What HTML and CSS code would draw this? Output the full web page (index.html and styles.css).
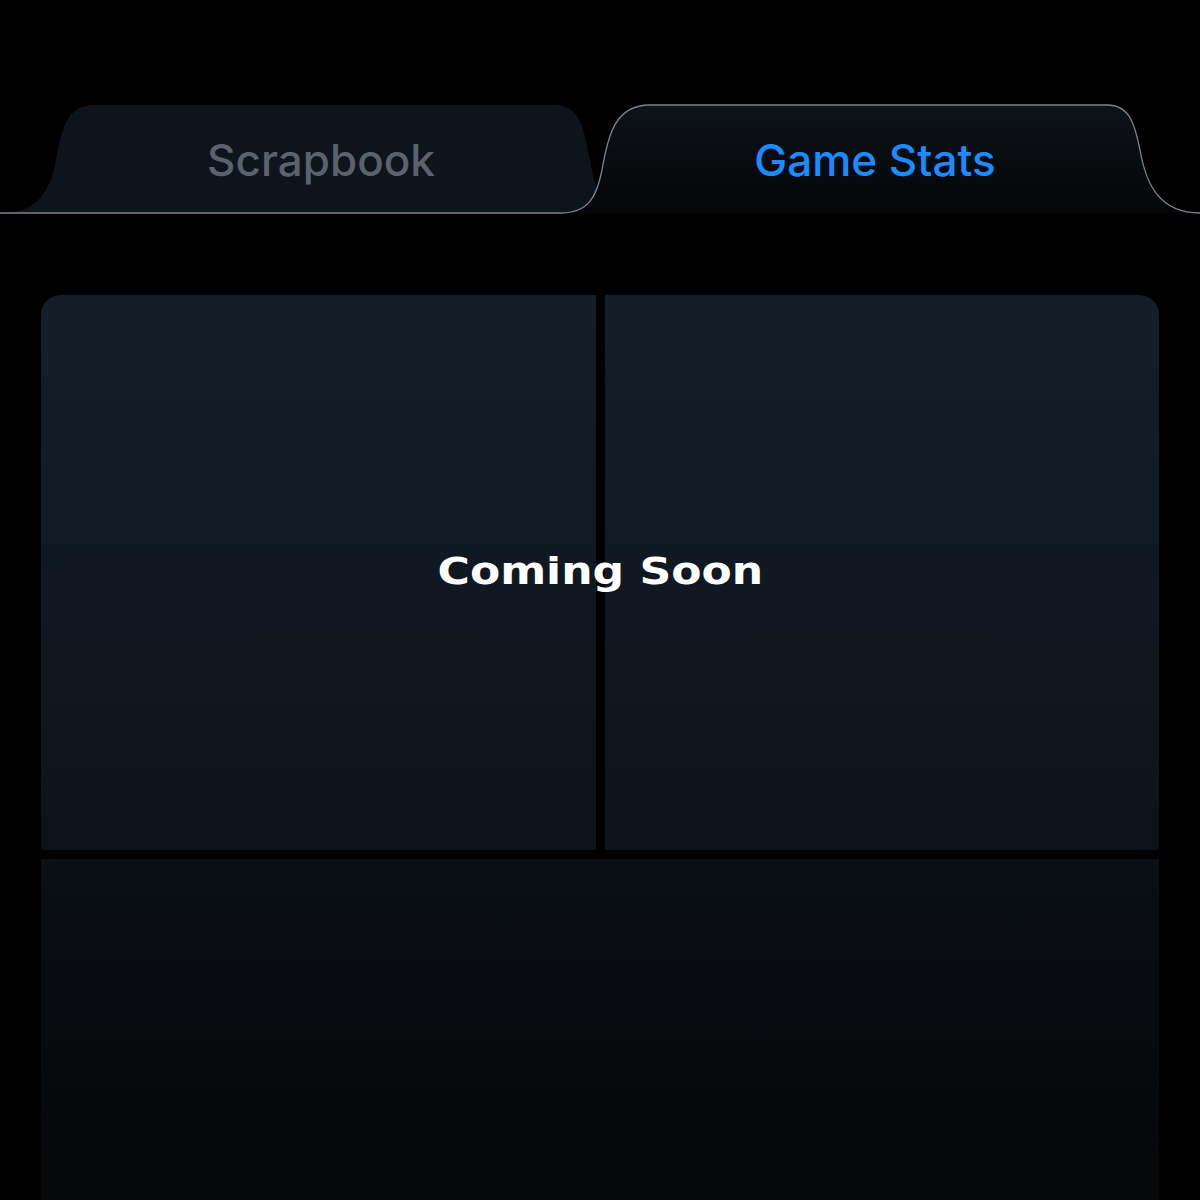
FILE: index.html
```html
<!DOCTYPE html>
<html lang="en">
<head>
    <meta charset="UTF-8" />
    <meta name="viewport" content="width=device-width,initial-scale=1.0" />
    <title>Game Stats</title>
    <link rel="stylesheet" href="styles.css">
</head>
<body>

    <div class="tabs">
        <svg class="tab-shapes" width="1200" height="120" viewBox="0 100 1200 120">
            <defs>
                <linearGradient id="activeFill" x1="0" y1="0" x2="0" y2="1">
                    <stop offset="0" stop-color="#0d1319" />
                    <stop offset="1" stop-color="#040506" />
                </linearGradient>
            </defs>
            <!-- inactive tab -->
            <path fill="#0e141b"
                  d="M0 213 C35 213 48 195 55 165 C62 130 65 105 95 105 L555 105 C578 105 583 125 588 150 C593 178 598 200 612 213 Z" />
            <!-- active tab -->
            <path fill="url(#activeFill)"
                  d="M560 213 C590 213 597 195 602 170 C608 135 615 105 650 105 L1107 105 C1130 105 1135 125 1140 150 C1146 185 1160 213 1200 213 Z" />
            <path fill="none" stroke="#7c828b" stroke-width="1.3"
                  d="M0 213 L560 213 C590 213 597 195 602 170 C608 135 615 105 650 105 L1107 105 C1130 105 1135 125 1140 150 C1146 185 1160 213 1200 213" />
        </svg>
        <div class="tab-labels">
            <div class="tab">Scrapbook</div>
            <div class="tab active">Game Stats</div>
        </div>
    </div>

    <div class="stats">
        <div class="panel panel-left"></div>
        <div class="panel panel-right"></div>
        <div class="panel panel-wide"></div>
        <div class="soon">
            <span>Coming Soon</span>
        </div>
    </div>

</body>
</html>
```

FILE: styles.css
```css
body {
    margin: 0;
    padding: 0;
    background: #000;
    height: 1200px;
    overflow: hidden;
    font-family: Inter, "Noto Sans", sans-serif;
}

.tabs {
    position: relative;
    margin-top: 100px;
    height: 120px;
}

.tab-shapes {
    position: absolute;
    top: 0;
    left: 0;
    display: block;
}

.tab-labels {
    position: relative;
    display: grid;
    grid-template-columns: 1fr 1fr;
    align-items: center;
    height: 100%;
    padding: 0 48px 0 44px;
}

.tab {
    text-align: center;
    font-size: 44px;
    font-weight: 500;
    color: #5a626e;
}

.tab.active {
    color: #1a8cff;
}

.stats {
    position: relative;
    display: grid;
    grid-template-columns: 1fr 1fr;
    grid-template-rows: 555px 341px;
    gap: 9px;
    margin: 75px 41px 0;
}

.panel {
    background: linear-gradient(to bottom, #131f28, #0c131a);
}

.panel-left {
    border-top-left-radius: 20px;
}

.panel-right {
    border-top-right-radius: 20px;
}

.panel-wide {
    grid-column: 1 / 3;
    background: linear-gradient(to bottom, #0a0f14, #050709);
}

.soon {
    position: absolute;
    top: 0;
    left: 0;
    right: 0;
    height: 555px;
    display: flex;
    justify-content: center;
    align-items: center;
    padding-bottom: 4px;
    box-sizing: border-box;
}

.soon span {
    display: inline-block;
    font-family: "DejaVu Sans", sans-serif;
    font-weight: bold;
    font-size: 38px;
    color: #fff;
    transform: scaleX(1.16);
}
```
